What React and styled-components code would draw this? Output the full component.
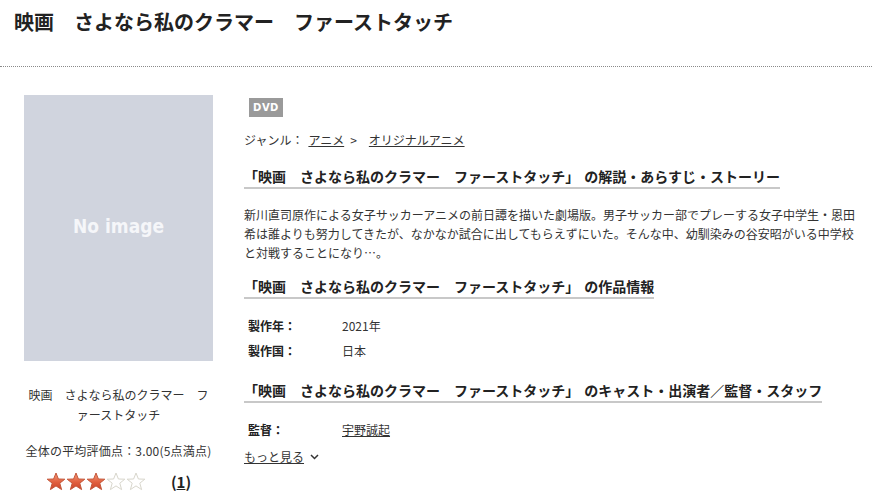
import React from "react";
import styled, { createGlobalStyle } from "styled-components";

const Global = createGlobalStyle`
  html, body { margin: 0; padding: 0; background: #fff; }
  body {
    font-family: "Noto Sans CJK JP", "Noto Sans", sans-serif;
    color: #333;
    width: 872px;
    overflow: hidden;
  }
  a { color: inherit; }
`;

const Header = styled.header`
  height: 67px;
  border-bottom: 1px dotted #8a8a8a;
  box-sizing: border-box;
  padding: 7px 14px 0;
`;

const Title = styled.h1`
  margin: 0;
  font-size: 20px;
  line-height: 30px;
  font-weight: bold;
  color: #222;
`;

const Main = styled.main`
  display: flex;
  padding: 28px 0 0 24px;
`;

const Side = styled.aside`
  width: 189px;
  flex: none;
  display: flex;
  flex-direction: column;
  align-items: center;
`;

const NoImage = styled.div`
  width: 189px;
  height: 266px;
  background: #d0d4de;
  display: flex;
  align-items: center;
  justify-content: center;
  padding-bottom: 4px;
  box-sizing: border-box;
  color: #f5f6f9;
  font-family: "DejaVu Sans Condensed", "DejaVu Sans", sans-serif;
  font-weight: bold;
  font-size: 19px;
`;

const Caption = styled.p`
  margin: 24px 0 0;
  font-size: 12px;
  line-height: 20px;
  text-align: center;
  color: #333;
`;

const Average = styled.p`
  margin: 16px 0 0;
  font-size: 12px;
  line-height: 20px;
  text-align: center;
  white-space: nowrap;
  letter-spacing: 0.2px;
  color: #333;
`;

const RatingRow = styled.div`
  display: flex;
  align-items: center;
  gap: 25px;
  margin-top: 10px;
`;

const Stars = styled.div`
  display: flex;
`;

const Count = styled.span`
  font-size: 15px;
  font-weight: bold;
  color: #222;
  & a { text-decoration: underline; }
`;

const Content = styled.section`
  margin-left: 31px;
  width: 617px;
  display: flex;
  flex-direction: column;
  align-items: flex-start;
`;

const Badge = styled.span`
  margin: 3px 0 0 5px;
  width: 34px;
  height: 19px;
  background: #9a9a9a;
  color: #fff;
  font-family: "DejaVu Sans", sans-serif;
  font-weight: bold;
  font-size: 10px;
  display: flex;
  align-items: center;
  justify-content: center;
  letter-spacing: 0.5px;
`;

const Genre = styled.div`
  margin-top: 13px;
  font-size: 12px;
  line-height: 20px;
  color: #333;
`;

const GenreLink = styled.a`
  text-decoration: underline;
  margin-left: ${(p) => (p.$first ? 5 : 0)}px;
`;

const Sep = styled.span`
  margin: 0 12px 0 6px;
`;

const Heading = styled.h2`
  margin: ${(p) => p.$mt}px 0 0;
  font-size: 14px;
  line-height: 20px;
  font-weight: bold;
  color: #222;
  border-bottom: 2px solid #c8c8c8;
  padding-bottom: 1px;
  white-space: nowrap;
`;

const HeadingTail = styled.span`
  margin-left: 5px;
`;

const Story = styled.p`
  margin: 16px 0 0;
  font-size: 12px;
  line-height: 19px;
  color: #333;
`;

const InfoList = styled.dl`
  margin: ${(p) => p.$mt}px 0 0 4px;
  display: grid;
  grid-template-columns: 94px auto;
  row-gap: 5px;
  font-size: 12px;
  line-height: 20px;
`;

const Label = styled.dt`
  font-weight: bold;
  color: #222;
`;

const Value = styled.dd`
  margin: 0;
  color: #333;
  & a { text-decoration: underline; }
`;

const More = styled.a`
  margin-top: 7px;
  font-size: 12px;
  line-height: 20px;
  color: #333;
  display: flex;
  align-items: center;
  gap: 6px;
  & span { text-decoration: underline; }
`;

const Star = ({ filled }) => (
  <svg width="20" height="19" viewBox="0 0 20 19">
    <defs>
      <linearGradient id="sg" x1="0" y1="0" x2="0" y2="1">
        <stop offset="0" stopColor="#f29a7c" />
        <stop offset="0.55" stopColor="#e2603f" />
        <stop offset="1" stopColor="#c9452a" />
      </linearGradient>
    </defs>
    <path
      d="M10 1 L12.4 7 L18.8 7.2 L13.8 11.2 L15.6 17.6 L10 13.9 L4.4 17.6 L6.2 11.2 L1.2 7.2 L7.6 7 Z"
      fill={filled ? "url(#sg)" : "#fff"}
      stroke={filled ? "#c4573a" : "#d8d6cc"}
      strokeWidth="1"
      strokeLinejoin="round"
    />
  </svg>
);

const Chevron = () => (
  <svg width="9" height="6" viewBox="0 0 9 6">
    <path d="M1 1 L4.5 4.5 L8 1" fill="none" stroke="#333" strokeWidth="1.5" />
  </svg>
);

const TITLE = "映画　さよなら私のクラマー　ファーストタッチ";

const SectionHeading = ({ mt, children }) => (
  <Heading $mt={mt}>
    「{TITLE}」<HeadingTail>{children}</HeadingTail>
  </Heading>
);

export default function App() {
  return (
    <>
      <Global />
      <Header>
        <Title>{TITLE}</Title>
      </Header>
      <Main>
        <Side>
          <NoImage>No image</NoImage>
          <Caption>
            映画　さよなら私のクラマー　フ
            <br />
            ァーストタッチ
          </Caption>
          <Average>全体の平均評価点：3.00(5点満点)</Average>
          <RatingRow>
            <Stars>
              {[1, 2, 3, 4, 5].map((n) => (
                <Star key={n} filled={n <= 3} />
              ))}
            </Stars>
            <Count>
              (<a>1</a>)
            </Count>
          </RatingRow>
        </Side>
        <Content>
          <Badge>DVD</Badge>
          <Genre>
            ジャンル：<GenreLink $first>アニメ</GenreLink>
            <Sep>&gt;</Sep>
            <GenreLink>オリジナルアニメ</GenreLink>
          </Genre>
          <SectionHeading mt={16}>の解説・あらすじ・ストーリー</SectionHeading>
          <Story>
            新川直司原作による女子サッカーアニメの前日譚を描いた劇場版。男子サッカー部でプレーする女子中学生・恩田希は誰よりも努力してきたが、なかなか試合に出してもらえずにいた。そんな中、幼馴染みの谷安昭がいる中学校と対戦することになり…。
          </Story>
          <SectionHeading mt={14}>の作品情報</SectionHeading>
          <InfoList $mt={17}>
            <Label>製作年：</Label>
            <Value>2021年</Value>
            <Label>製作国：</Label>
            <Value>日本</Value>
          </InfoList>
          <SectionHeading mt={19}>のキャスト・出演者／監督・スタッフ</SectionHeading>
          <InfoList $mt={17}>
            <Label>監督：</Label>
            <Value>
              <a>宇野誠起</a>
            </Value>
          </InfoList>
          <More>
            <span>もっと見る</span>
            <Chevron />
          </More>
        </Content>
      </Main>
    </>
  );
}
